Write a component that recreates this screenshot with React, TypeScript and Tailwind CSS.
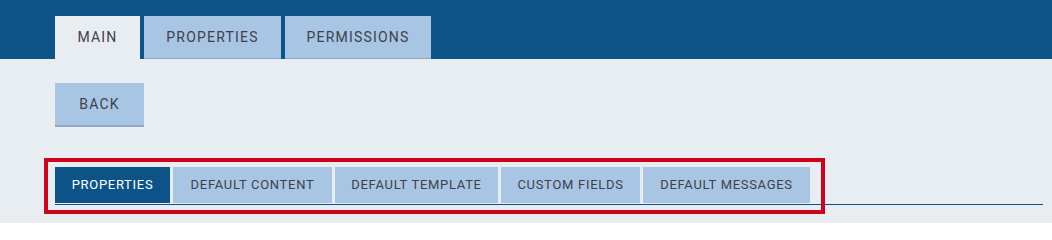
import React from "react";

const topTabs = [
  { label: "MAIN", w: "w-[85px]", active: true },
  { label: "PROPERTIES", w: "w-[137px]", active: false },
  { label: "PERMISSIONS", w: "w-[146px]", active: false },
];

const subTabs = [
  { label: "PROPERTIES", w: "w-[115px]", active: true },
  { label: "DEFAULT CONTENT", w: "w-[159px]", active: false },
  { label: "DEFAULT TEMPLATE", w: "w-[163px]", active: false },
  { label: "CUSTOM FIELDS", w: "w-[139px]", active: false },
  { label: "DEFAULT MESSAGES", w: "w-[167px]", active: false },
];

export default function App() {
  return (
    <div
      className="relative w-[1052px] h-[223px] bg-[#e8edf2] overflow-hidden"
      style={{ fontFamily: "Roboto, 'Liberation Sans', sans-serif" }}
    >
      <div className="h-[59px] bg-[#0c5487] pl-[55px] pt-[16px] flex gap-[4px]">
        {topTabs.map((t) => (
          <div
            key={t.label}
            className={`${t.w} h-[43px] flex items-center justify-center text-[14px] tracking-[1.2px] text-[#40404c] ${
              t.active ? "bg-[#e8edf2]" : "bg-[#a8c6e3] border-b border-[#8aa7c8]"
            }`}
          >
            {t.label}
          </div>
        ))}
      </div>

      <div className="pl-[55px] pt-[24px]">
        <button className="w-[89px] h-[44px] bg-[#a8c6e3] border-b-2 border-[#8fa8c8] text-[14px] tracking-[1.2px] text-[#40404c] flex items-center justify-center">
          BACK
        </button>
      </div>

      <div className="ml-[55px] mr-[9px] mt-[40px] border-b border-[#0c5487] flex gap-[3px]">
        {subTabs.map((t) => (
          <div
            key={t.label}
            className={`${t.w} h-[36px] mb-[1px] flex items-center justify-center text-[13px] tracking-[0.7px] ${
              t.active ? "bg-[#0c5487] text-white" : "bg-[#a8c6e3] text-[#40404c]"
            }`}
          >
            {t.label}
          </div>
        ))}
      </div>

      <div className="absolute left-[44px] top-[158px] w-[781px] h-[56px] border-4 border-[#d0021b] pointer-events-none" />
    </div>
  );
}
